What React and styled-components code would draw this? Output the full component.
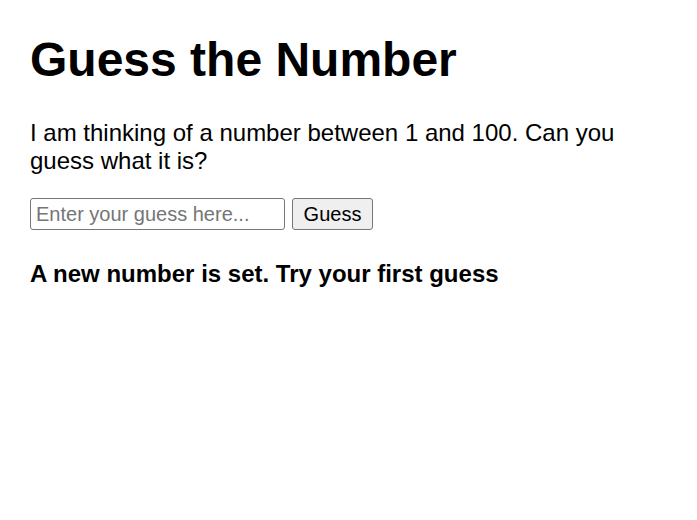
import React, { useState } from 'react'
import styled, { createGlobalStyle } from 'styled-components'

const GlobalStyle = createGlobalStyle`
  html, body {
    margin: 0;
    padding: 0;
    background: #ffffff;
  }
  body {
    font-family: "Liberation Sans", Arial, sans-serif;
    font-size: 24px;
    color: #000000;
  }
`

const Page = styled.main`
  padding: 32px 30px 0;
`

const Title = styled.h1`
  margin: 0 0 32px;
  font-size: 48px;
  font-weight: 700;
`

const Intro = styled.p`
  margin: 0 0 23px;
  font-size: 24px;
`

const GuessForm = styled.form`
  display: flex;
  align-items: center;
  gap: 7px;
  margin: 0 0 30px;
`

const GuessInput = styled.input`
  box-sizing: border-box;
  width: 255px;
  height: 32px;
  padding: 0 5px;
  font-family: inherit;
  font-size: 20px;
  color: #000;
  border: 1px solid #767676;
  border-radius: 3px;
  outline: none;

  &::placeholder {
    color: #757575;
  }
`

const GuessButton = styled.button`
  box-sizing: border-box;
  width: 81px;
  height: 32px;
  padding: 0 10px;
  font-family: inherit;
  font-size: 20px;
  color: #000;
  background: #efefef;
  border: 1px solid #767676;
  border-radius: 3px;
`

const Status = styled.p`
  margin: 0;
  font-size: 24px;
  font-weight: 700;
`

const App = () => {
  const [guess, setGuess] = useState('')

  return (
    <>
      <GlobalStyle />
      <Page>
        <Title>Guess the Number</Title>
        <Intro>I am thinking of a number between 1 and 100. Can you guess what it is?</Intro>
        <GuessForm onSubmit={(e) => e.preventDefault()}>
          <GuessInput
            type="text"
            placeholder="Enter your guess here..."
            value={guess}
            onChange={(e) => setGuess(e.target.value)}
          />
          <GuessButton type="submit">Guess</GuessButton>
        </GuessForm>
        <Status>A new number is set. Try your first guess</Status>
      </Page>
    </>
  )
}

export default App
